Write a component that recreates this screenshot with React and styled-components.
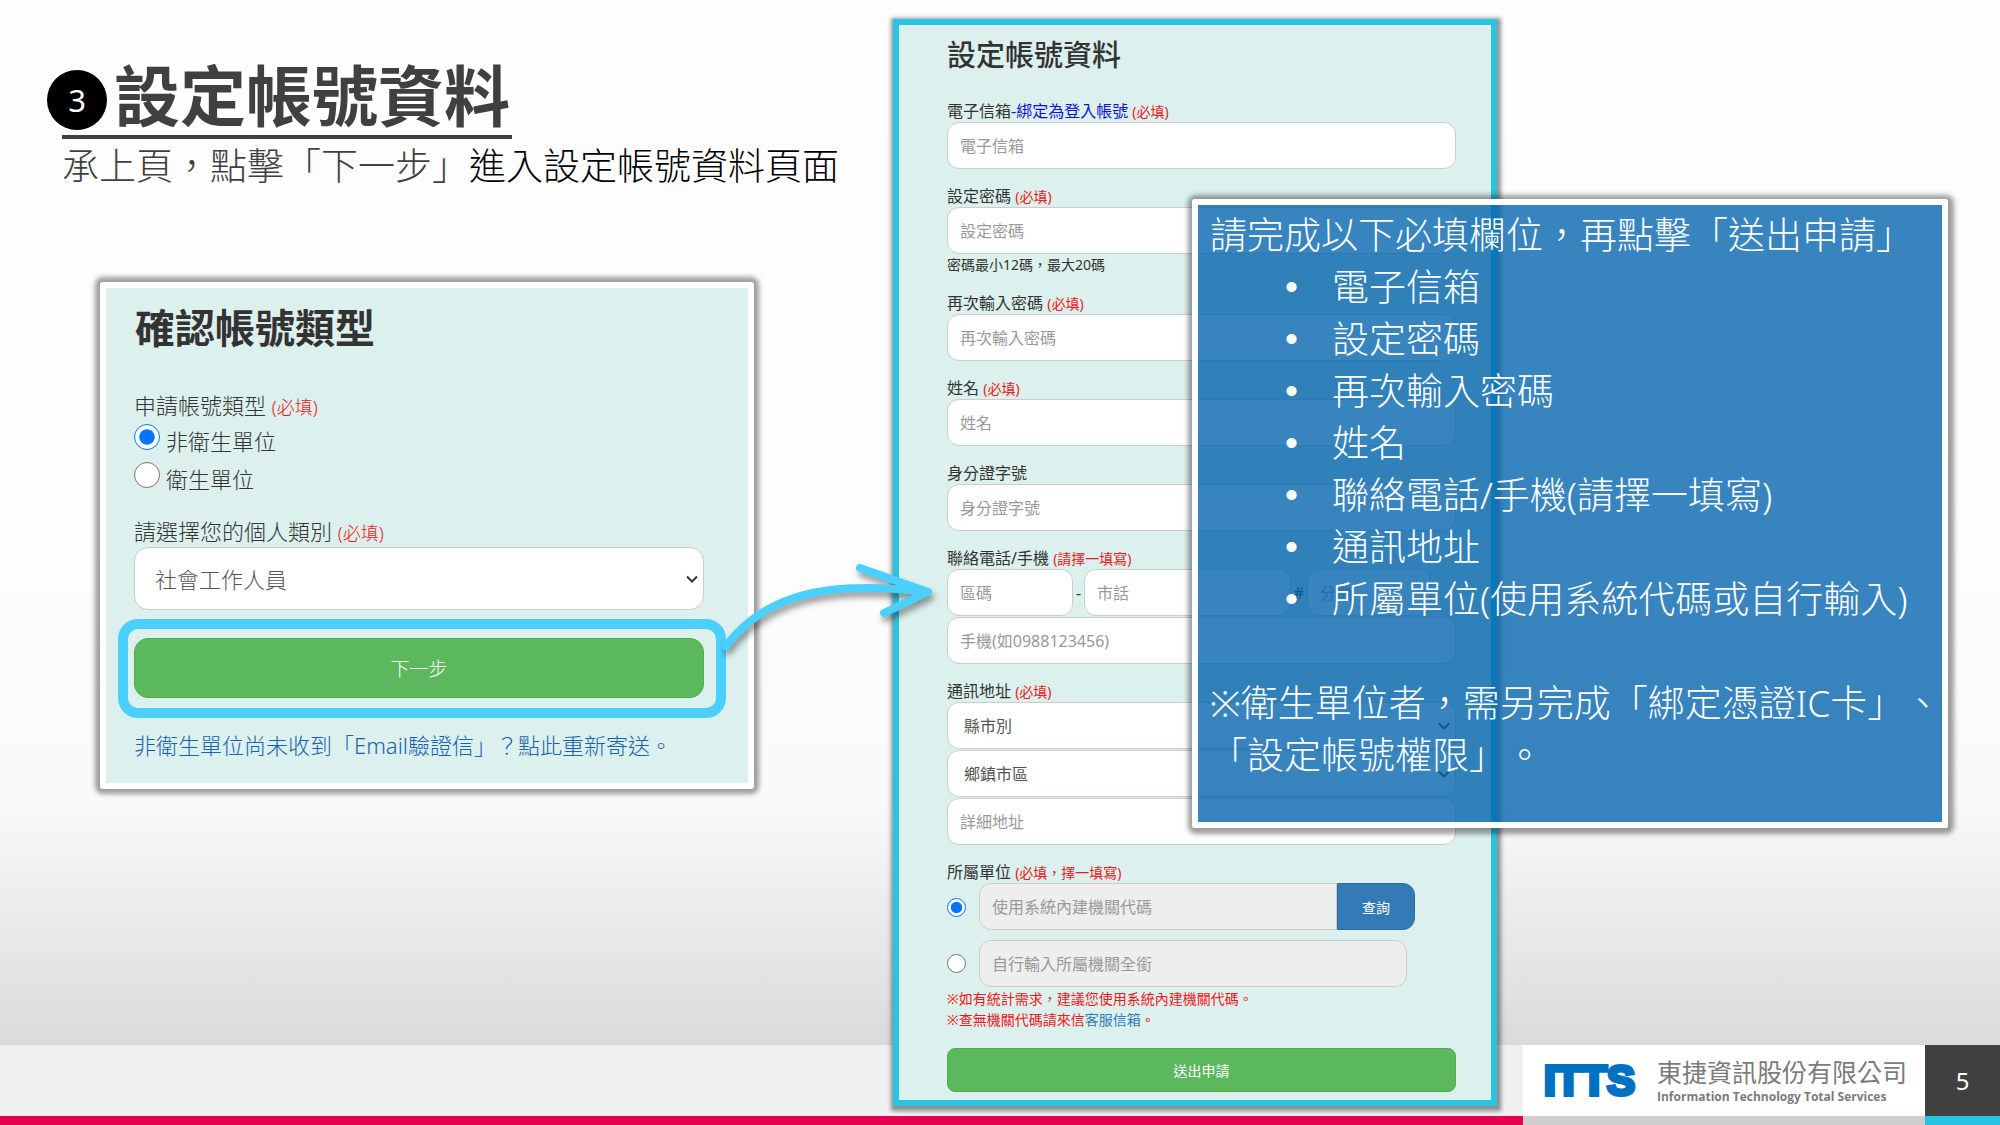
import React from 'react'
import styled, { createGlobalStyle } from 'styled-components';

const GlobalStyle = createGlobalStyle`
* {
box-sizing: border-box;
}
body {
margin: 0;
font-family: "Noto Sans", "Noto Sans CJK TC", sans-serif;
text-spacing-trim: space-all;
color: #333;
}
input, select, button {
font-family: inherit;
}
`;
const Slide = styled.div`
position: relative;
min-height: 100vh;
display: flex;
flex-direction: column;
overflow: hidden;
background: linear-gradient(#fefefe 0%, #fcfcfc 55%, #fafafa 71%, #dadada 93%);
`;
const Main = styled.main`
flex: 1;
display: grid;
grid-template-columns: 893fr 604fr 503fr;
align-items: start;
`;
const Left = styled.section`
padding: 52px 0 0 47px;
`;
const TitleRow = styled.div`
display: flex;
align-items: center;
gap: 7px;
`;
const Badge = styled.span`
flex: none;
display: flex;
align-items: center;
justify-content: center;
width: 60px;
height: 60px;
margin-top: 10px;
border-radius: 50%;
background: #000;
color: #fff;
font-size: 31px;
`;
const Title = styled.h1`
margin: 0;
font-size: 66px;
line-height: 86px;
font-weight: 700;
color: #404040;
`;
const Rule = styled.hr`
width: 450px;
height: 4px;
margin: -3px 0 0 15px;
border: 0;
background: #404040;
`;
const Lead = styled.p`
margin: 0 0 0 15px;
font-size: 37px;
line-height: 54px;
font-weight: 300;
white-space: nowrap;
color: #404040;
b {
font-weight: 300;
color: #000;
}
`;
const TypeCard = styled.form`
width: 654px;
margin: 89px 0 0 53px;
padding: 12px 44px 22px 28px;
border: 6px solid #fff;
border-radius: 3px;
background: #dcf0ed;
box-shadow: 0 0 5px 5px rgba(0, 0, 0, .38);
`;
const CardTitle = styled.h2`
margin: 0 0 32px 1px;
font-size: 40px;
line-height: 56px;
font-weight: 700;
`;
const Legend = styled.div`
font-size: 22px;
line-height: 32px;
font-weight: 300;
`;
const Required = styled.span`
font-size: ${(p) => p.$size || 14}px;
line-height: 1;
color: #f01820;
`;
const RadioLine = styled.label`
display: flex;
align-items: center;
gap: 6px;
height: 38px;
font-size: 22px;
font-weight: 300;
input {
margin-bottom: 6px;
}
`;
const Radio = styled.input`
flex: none;
width: ${(p) => p.$size}px;
height: ${(p) => p.$size}px;
margin: 0;
accent-color: #0075ff;
`;
const KindGroup = styled.div`
padding-top: 1px;
margin-bottom: 18px;
`;
const SelectWrap = styled.div`
position: relative;
flex: 1;
svg {
position: absolute;
right: 6px;
top: 50%;
margin-top: -4px;
pointer-events: none;
}
`;
const BigSelect = styled.select`
appearance: none;
display: block;
width: 100%;
height: 63px;
padding: 0 20px;
border: 1px solid #ccc;
border-radius: 14px;
background: #fff;
color: #555;
font-size: 22px;
font-weight: 300;
`;
const Highlight = styled.div`
margin: 9px -22px 0 -16px;
padding: 9px 12px 10px 6px;
border: 10px solid #4bcffc;
border-radius: 20px;
`;
const GreenButton = styled.button`
display: block;
width: 100%;
height: ${(p) => p.$height}px;
border: 1px solid #4cae4c;
border-radius: ${(p) => p.$radius}px;
background: #5cb85c;
color: #fff;
font-size: ${(p) => p.$size}px;
font-weight: ${(p) => p.$weight};
`;
const ResendLink = styled.a`
display: block;
margin-top: 11px;
font-size: 22px;
line-height: 32px;
font-weight: 300;
white-space: nowrap;
text-decoration: none;
color: #1562b0;
`;
const Arrow = styled.svg`
position: absolute;
z-index: 2;
left: 716px;
top: 556px;
width: 230px;
height: 110px;
filter: drop-shadow(2px 5px 3px rgba(0, 0, 0, .4));
`;
const DataForm = styled.form`
position: relative;
z-index: 1;
margin: 19px 0 -62px;
padding: 12px 35px 8px 48px;
border: 6px solid #29c4e2;
background: #dcf0ed;
box-shadow: 1px 2px 4px 3px rgba(0, 0, 0, .42);
`;
const FormTitle = styled.h2`
margin: 0 0 27px;
font-size: 29px;
line-height: 36px;
font-weight: 500;
`;
const Field = styled.div`
margin-bottom: 16px;
font-size: 16px;
`;
const Label = styled.label`
display: block;
font-size: 16px;
line-height: 22px;
`;
const Blue = styled.span`
color: #1410d0;
`;
const Help = styled.div`
font-size: 14px;
line-height: 22px;
`;
const Row = styled.div`
display: flex;
align-items: center;
margin-bottom: 1px;
`;
const Sign = styled.span`
width: ${(p) => p.$width}px;
text-align: center;
`;
const Input = styled.input`
display: block;
width: ${(p) => p.$width || '100%'};
height: 47px;
padding: 0 12px;
border: 1px solid #ccc;
border-radius: ${(p) => (p.$joined ? '12px 0 0 12px' : '12px')};
background: #fff;
font-size: 16px;
&::placeholder {
color: #999;
opacity: 1;
}
&:disabled {
background: #eee;
}
`;
const Select = styled.select`
appearance: none;
display: block;
width: 100%;
height: 47px;
padding: 0 16px;
border: 1px solid #ccc;
border-radius: 12px;
background: #fff;
color: #555;
font-size: 16px;
`;
const Choice = styled.div`
display: flex;
align-items: center;
gap: 13px;
margin-bottom: ${(p) => p.$gap}px;
`;
const QueryButton = styled.button`
width: 78px;
height: 47px;
border: 1px solid #2e6da4;
border-radius: 0 12px 12px 0;
background: #337ab7;
color: #fff;
font-size: 14px;
`;
const Notes = styled.p`
margin: 0 0 18px;
font-size: 14px;
line-height: 21px;
color: #f01820;
a {
color: #337ab7;
text-decoration: none;
}
`;
const Callout = styled.aside`
position: absolute;
z-index: 2;
left: 1192px;
top: 199px;
width: 756px;
padding: 4px 0 41px 12px;
border: 6px solid #fff;
border-radius: 3px;
background: rgba(0, 97, 172, .78);
background-clip: padding-box;
box-shadow: 1px 1px 5px 5px rgba(0, 0, 0, .38);
font-size: 37px;
line-height: 52px;
font-weight: 300;
white-space: nowrap;
color: #fff;
p {
margin: 0;
}
`;
const Steps = styled.ul`
margin: 0 0 52px;
padding: 0;
list-style: none;
li {
display: flex;
}
li::before {
content: '•';
width: 47px;
margin-left: 75px;
font-family: "Liberation Sans", sans-serif;
font-weight: 400;
}
`;
const Footer = styled.footer`
display: grid;
grid-template-columns: 1fr 402px 75px;
height: 80px;
`;
const FootBar = styled.div`
border-bottom: 9px solid #e60050;
background: #f0f0f0;
`;
const Brand = styled.div`
display: flex;
align-items: center;
gap: 22px;
padding-left: 21px;
border-bottom: 9px solid #cfcdce;
background: #fff;
color: #7b7b7b;
`;
const Logo = styled.strong`
width: 91px;
font-family: "Liberation Sans", Arial, sans-serif;
font-size: 42px;
line-height: 60px;
color: #0070c0;
-webkit-text-stroke: 4px #0070c0;
`;
const Company = styled.div`
font-size: 25px;
line-height: 32px;
white-space: nowrap;
small {
display: block;
font-family: "Open Sans", sans-serif;
font-size: 12px;
line-height: 18px;
font-weight: 700;
}
`;
const PageNumber = styled.div`
display: flex;
align-items: center;
justify-content: center;
border-bottom: 9px solid #26c4e2;
background: #404040;
color: #fff;
font-size: 24px;
`;

function Chevron() {
    return (
        <svg width="12" height="8" viewBox="0 0 12 8" fill="none" stroke="#333" strokeWidth="2">
            <path d="M1 1.5l5 5 5-5" />
        </svg>
    );
}

function TextField({ id, label, extra, required, help }) {
    return (
        <Field>
            <Label htmlFor={id}>
                {label}{extra && <Blue>{extra}</Blue>} {required && <Required>(必填)</Required>}
            </Label>
            <Input id={id} placeholder={label} />
            {help && <Help>{help}</Help>}
        </Field>
    );
}

const steps = ['電子信箱', '設定密碼', '再次輸入密碼', '姓名', '聯絡電話/手機(請擇一填寫)', '通訊地址', '所屬單位(使用系統代碼或自行輸入)'];

function App() {
    return (
        <Slide lang="zh-TW">
            <GlobalStyle />
            <Main>
                <Left>
                    <TitleRow><Badge>3</Badge><Title>設定帳號資料</Title></TitleRow>
                    <Rule />
                    <Lead>承上頁，點擊「下一步」<b>進入設定帳號資料頁面</b></Lead>
                    <TypeCard>
                        <CardTitle>確認帳號類型</CardTitle>
                        <KindGroup>
                            <Legend>申請帳號類型 <Required $size={18}>(必填)</Required></Legend>
                            <RadioLine><Radio type="radio" name="kind" $size={26} defaultChecked />非衛生單位</RadioLine>
                            <RadioLine><Radio type="radio" name="kind" $size={26} />衛生單位</RadioLine>
                        </KindGroup>
                        <Legend as="label" htmlFor="person">請選擇您的個人類別 <Required $size={18}>(必填)</Required></Legend>
                        <SelectWrap>
                            <BigSelect id="person"><option>社會工作人員</option></BigSelect>
                            <Chevron />
                        </SelectWrap>
                        <Highlight>
                            <GreenButton type="button" $height={60} $radius={14} $size={19} $weight={300}>下一步</GreenButton>
                        </Highlight>
                        <ResendLink href="#resend">非衛生單位尚未收到「Email驗證信」？點此重新寄送。</ResendLink>
                    </TypeCard>
                </Left>
                <DataForm>
                    <FormTitle>設定帳號資料</FormTitle>
                    <TextField id="mail" label="電子信箱" extra="-綁定為登入帳號" required />
                    <TextField id="pwd" label="設定密碼" required help="密碼最小12碼，最大20碼" />
                    <TextField id="pwd2" label="再次輸入密碼" required />
                    <TextField id="name" label="姓名" required />
                    <TextField id="idno" label="身分證字號" />
                    <Field>
                        <Label htmlFor="area">聯絡電話/手機 <Required>(請擇一填寫)</Required></Label>
                        <Row>
                            <Input id="area" placeholder="區碼" $width="126px" />
                            <Sign $width={11}>-</Sign>
                            <Input aria-label="市話" placeholder="市話" $width="207px" />
                            <Sign $width={16}>#</Sign>
                            <Input aria-label="分機" placeholder="分機" $width="124px" />
                        </Row>
                        <Input aria-label="手機" placeholder="手機(如0988123456)" />
                    </Field>
                    <Field>
                        <Label htmlFor="city">通訊地址 <Required>(必填)</Required></Label>
                        <Row>
                            <SelectWrap><Select id="city"><option>縣市別</option></Select><Chevron /></SelectWrap>
                        </Row>
                        <Row>
                            <SelectWrap><Select aria-label="鄉鎮市區"><option>鄉鎮市區</option></Select><Chevron /></SelectWrap>
                        </Row>
                        <Input aria-label="詳細地址" placeholder="詳細地址" />
                    </Field>
                    <Label as="div">所屬單位 <Required>(必填，擇一填寫)</Required></Label>
                    <Choice $gap={9}>
                        <Radio type="radio" name="unit" aria-label="使用系統內建機關代碼" $size={19} defaultChecked />
                        <Row>
                            <Input aria-label="機關代碼" placeholder="使用系統內建機關代碼" $width="358px" $joined disabled />
                            <QueryButton type="button">查詢</QueryButton>
                        </Row>
                    </Choice>
                    <Choice $gap={1}>
                        <Radio type="radio" name="unit" aria-label="自行輸入所屬機關全銜" $size={19} />
                        <Input aria-label="機關全銜" placeholder="自行輸入所屬機關全銜" $width="428px" disabled />
                    </Choice>
                    <Notes>
                        ※如有統計需求，建議您使用系統內建機關代碼。<br />
                        ※查無機關代碼請來信<a href="#mail">客服信箱</a>。
                    </Notes>
                    <GreenButton type="button" $height={44} $radius={8} $size={14} $weight={400}>送出申請</GreenButton>
                </DataForm>
            </Main>
            <Footer>
                <FootBar />
                <Brand>
                    <Logo>ITTS</Logo>
                    <Company>東捷資訊股份有限公司<small>Information Technology Total Services</small></Company>
                </Brand>
                <PageNumber>5</PageNumber>
            </Footer>
            <Arrow viewBox="0 0 230 110" fill="none" stroke="#4bcffc" strokeWidth="8" strokeLinecap="round" strokeLinejoin="round">
                <path d="M10 90C44 46 96 22 210 36" />
                <path d="M144 12L212 36L168 57" />
            </Arrow>
            <Callout>
                <p>請完成以下必填欄位，再點擊「送出申請」</p>
                <Steps>
                    {steps.map((step) => <li key={step}>{step}</li>)}
                </Steps>
                <p>※衛生單位者，需另完成「綁定憑證IC卡」、</p>
                <p>「設定帳號權限」。</p>
            </Callout>
        </Slide>
    );
}
export default App
